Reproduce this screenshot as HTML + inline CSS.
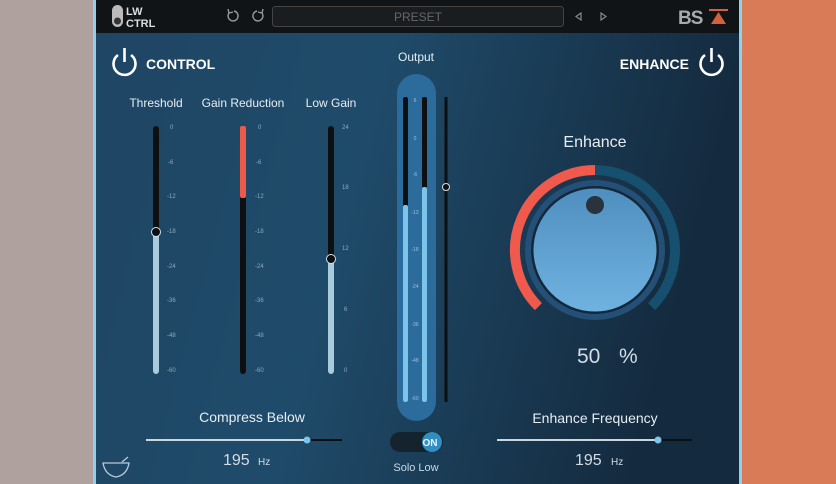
<!DOCTYPE html>
<html><head><meta charset="utf-8"><style>
*{margin:0;padding:0}
body{width:836px;height:484px;overflow:hidden;background:#aea19e;font-family:"Liberation Sans",sans-serif;position:relative}
svg{position:absolute;left:0;top:0}
text{font-family:"Liberation Sans",sans-serif}
</style></head><body>
<svg width="836" height="484" viewBox="0 0 836 484">
<defs>
<linearGradient id="bg" x1="0" y1="0" x2="1" y2="0.2">
<stop offset="0" stop-color="#1f4563"/><stop offset="0.45" stop-color="#1f4b6a"/><stop offset="1" stop-color="#142a3e"/>
</linearGradient>
<linearGradient id="knob" x1="0" y1="0" x2="0" y2="1">
<stop offset="0" stop-color="#4f8fbf"/><stop offset="1" stop-color="#6fb2e0"/>
</linearGradient>
</defs>
<rect x="0" y="0" width="93" height="484" fill="#aea19e"/>
<rect x="742" y="0" width="94" height="484" fill="#d97b57"/>
<rect x="93" y="0" width="649" height="484" fill="#8fd0ea"/>
<rect x="96" y="0" width="643" height="484" fill="url(#bg)"/>
<rect x="96" y="0" width="643" height="33" fill="#111417"/>
<!-- logo -->
<rect x="112" y="5" width="11" height="22" rx="5.5" fill="#bbb"/>
<circle cx="117.5" cy="21" r="3.5" fill="#333"/>
<text x="126" y="15" font-size="11" fill="#ddd" font-weight="bold">LW</text>
<text x="126" y="27" font-size="11" fill="#ddd" font-weight="bold">CTRL</text>
<!-- undo redo -->
<path d="M229 13 A5 5 0 1 0 234 11" fill="none" stroke="#999" stroke-width="1.4"/><path d="M228 9 L229 13 L233 12" fill="none" stroke="#999" stroke-width="1.4"/>
<path d="M262 13 A5 5 0 1 1 257 11" fill="none" stroke="#999" stroke-width="1.4"/><path d="M263 9 L262 13 L258 12" fill="none" stroke="#999" stroke-width="1.4"/>
<rect x="272.5" y="6.5" width="291" height="20" rx="3" fill="#1a1d20" stroke="#444" stroke-width="1"/>
<text x="418" y="21" font-size="12" fill="#666" text-anchor="middle">PRESET</text>
<path d="M581 13 L576 16.5 L581 20 Z" fill="none" stroke="#888" stroke-width="1.2"/>
<path d="M601 13 L606 16.5 L601 20 Z" fill="none" stroke="#888" stroke-width="1.2"/>
<text x="678" y="24" font-size="19" font-weight="bold" fill="#aaa" letter-spacing="-1">BS</text>
<rect x="709" y="9" width="19" height="2" fill="#d2623f"/>
<path d="M718.5 12 L711 24 L726 24 Z" fill="#d2623f"/>
<!-- power control -->
<path d="M118 55 A11 11 0 1 0 131 55" fill="none" stroke="#fff" stroke-width="2.6"/><line x1="124.5" y1="48" x2="124.5" y2="62" stroke="#fff" stroke-width="2.6"/>
<text x="146" y="69" font-size="14" font-weight="bold" fill="#fff">CONTROL</text>
<text x="689" y="69" font-size="14" font-weight="bold" fill="#fff" text-anchor="end">ENHANCE</text>
<path d="M705 55 A11 11 0 1 0 718 55" fill="none" stroke="#fff" stroke-width="2.6"/><line x1="711.5" y1="48" x2="711.5" y2="62" stroke="#fff" stroke-width="2.6"/>
<!-- labels -->
<g font-size="12" fill="#e6eef4" text-anchor="middle">
<text x="156" y="107">Threshold</text><text x="243" y="107">Gain Reduction</text><text x="331" y="107">Low Gain</text>
<text x="416" y="61">Output</text>
</g>
<!-- threshold -->
<rect x="153" y="126" width="6" height="248" rx="3" fill="#0d0f11"/>
<rect x="153" y="232" width="6" height="142" rx="3" fill="#a9ccdc"/>
<circle cx="156" cy="232" r="4.5" fill="#0d0f11" stroke="#cfe3ee" stroke-width="1"/>
<g font-size="6" fill="#8fa9bd">
<text x="170" y="129">0</text><text x="168" y="164">-6</text><text x="167" y="198">-12</text><text x="167" y="233">-18</text><text x="167" y="268">-24</text><text x="167" y="302">-36</text><text x="167" y="337">-48</text><text x="167" y="372">-60</text>
<text x="258" y="129">0</text><text x="256" y="164">-6</text><text x="255" y="198">-12</text><text x="255" y="233">-18</text><text x="255" y="268">-24</text><text x="255" y="302">-36</text><text x="255" y="337">-48</text><text x="255" y="372">-60</text>
<text x="342" y="129">24</text><text x="342" y="189">18</text><text x="342" y="250">12</text><text x="344" y="311">6</text><text x="344" y="372">0</text>
</g>
<!-- GR -->
<rect x="240" y="126" width="6" height="248" rx="3" fill="#0d0f11"/>
<rect x="240" y="126" width="6" height="72" rx="2" fill="#ec5a4a"/>
<!-- low gain -->
<rect x="328" y="126" width="6" height="248" rx="3" fill="#0d0f11"/>
<rect x="328" y="259" width="6" height="115" rx="3" fill="#a9ccdc"/>
<circle cx="331" cy="259" r="4.5" fill="#0d0f11" stroke="#cfe3ee" stroke-width="1"/>
<!-- output -->
<rect x="397" y="74" width="39" height="347" rx="19.5" fill="#2b6c9c"/>
<rect x="403" y="97" width="5" height="305" rx="2" fill="#0d0f11"/>
<rect x="403" y="205" width="5" height="197" rx="2" fill="#7cc4ea"/>
<rect x="422" y="97" width="5" height="305" rx="2" fill="#0d0f11"/>
<rect x="422" y="187" width="5" height="215" rx="2" fill="#7cc4ea"/>
<g font-size="5" fill="#9fc0d6" text-anchor="middle">
<text x="415" y="102">6</text><text x="415" y="140">0</text><text x="415" y="176">-6</text><text x="415" y="214">-12</text><text x="415" y="251">-18</text><text x="415" y="288">-24</text><text x="415" y="326">-36</text><text x="415" y="362">-48</text><text x="415" y="400">-60</text>
</g>
<rect x="444.5" y="97" width="3" height="305" fill="#0d0f11"/>
<circle cx="446" cy="187" r="3.5" fill="#0d0f11" stroke="#ddd" stroke-width="1"/>
<!-- toggle -->
<rect x="390" y="432" width="53" height="20" rx="10" fill="#15232f"/>
<circle cx="432" cy="442" r="10" fill="#2f8fc0"/>
<text x="430" y="446" font-size="10" fill="#e8f4fa" text-anchor="middle" font-weight="bold">ON</text>
<text x="416" y="471" font-size="11" fill="#c8d8e4" text-anchor="middle">Solo Low</text>
<!-- enhance knob -->
<text x="595" y="147" font-size="16" fill="#e6eef4" text-anchor="middle">Enhance</text>
<path d="M538.4 306.6 A80 80 0 1 1 651.6 306.6" fill="none" stroke="#17506e" stroke-width="10"/>
<path d="M538.4 306.6 A80 80 0 0 1 595 170" fill="none" stroke="#ef5a4c" stroke-width="10"/>
<circle cx="595" cy="250" r="70" fill="#244f77"/>
<circle cx="595" cy="250" r="64" fill="#13283a"/>
<circle cx="595" cy="250" r="61.5" fill="url(#knob)"/>
<circle cx="595" cy="205" r="9" fill="#28333d"/>
<text x="577" y="363" font-size="21" fill="#d2dde5">50</text>
<text x="619" y="363" font-size="21" fill="#d2dde5">%</text>
<!-- bottom sliders -->
<g font-size="14" fill="#e6eef4" text-anchor="middle"><text x="252" y="422">Compress Below</text><text x="595" y="423">Enhance Frequency</text></g>
<rect x="146" y="439" width="161" height="2" fill="#c9d6de"/><rect x="307" y="439" width="35" height="2" fill="#0d0f11"/>
<circle cx="307" cy="440" r="3.5" fill="#7cc4ea"/>
<rect x="497" y="439" width="161" height="2" fill="#c9d6de"/><rect x="658" y="439" width="34" height="2" fill="#0d0f11"/>
<circle cx="658" cy="440" r="3.5" fill="#7cc4ea"/>
<g fill="#d2dde5"><text x="223" y="465" font-size="16">195</text><text x="258" y="465" font-size="10">Hz</text>
<text x="575" y="465" font-size="16">195</text><text x="611" y="465" font-size="10">Hz</text></g>
<!-- bowl icon -->
<path d="M103 463 L129 463 Q127 475 116 477 Q105 475 103 463 Z" fill="none" stroke="#b8cad6" stroke-width="1.3"/>
<line x1="122" y1="462" x2="128" y2="457" stroke="#b8cad6" stroke-width="1.3"/>
</svg>
</body></html>
